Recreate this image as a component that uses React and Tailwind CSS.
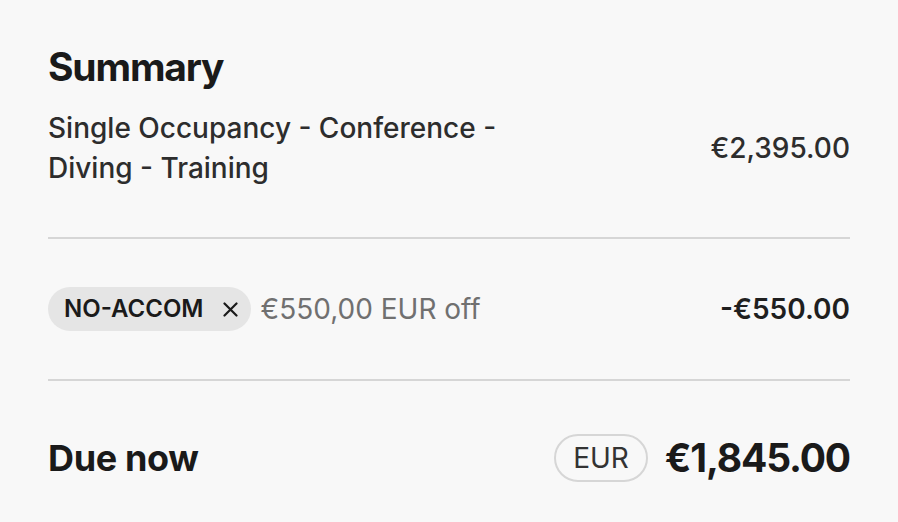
import React from 'react';

function App() {
  return (
    <div className="w-[898px] h-[522px] bg-[#f8f8f8] overflow-hidden" style={{ fontFamily: 'Inter, "Noto Sans", sans-serif' }}>
      <div className="px-12 pt-[43px]">
        {/* Summary */}
        <h2 className="text-[39px] leading-[48px] font-bold text-[#1a1a1a] tracking-[-0.03em]">Summary</h2>
        <div className="flex items-center justify-between mt-[17px] pb-[49px] border-b-2 border-[#d6d6d6]">
          <p className="text-[28px] leading-[40px] font-medium text-[#2d2d2d] w-[470px]">
            Single Occupancy - Conference - Diving - Training
          </p>
          <p className="text-[28px] leading-[40px] font-medium text-[#2d2d2d]">€2,395.00</p>
        </div>

        {/* Discount */}
        <div className="flex items-center justify-between pt-[48px] pb-[48px] border-b-2 border-[#d6d6d6]">
          <div className="flex items-center gap-[10px]">
            <span className="flex items-center gap-[19px] h-[44px] pl-4 pr-[13px] rounded-full bg-[#e5e5e5] text-[24px] font-semibold text-[#1a1a1a]">
              NO-ACCOM
              <svg width="15" height="15" viewBox="0 0 15 15" fill="none" stroke="#1a1a1a" strokeWidth="2.2" strokeLinecap="round">
                <path d="M1.5 1.5L13.5 13.5M13.5 1.5L1.5 13.5" />
              </svg>
            </span>
            <span className="text-[28px] text-[#707070]">€550,00 EUR off</span>
          </div>
          <p className="text-[28px] font-semibold text-[#1f1f1f]">-€550.00</p>
        </div>

        {/* Total */}
        <div className="flex items-center justify-between pt-[50px]">
          <p className="text-[36px] font-bold text-[#1a1a1a] tracking-[-0.01em]">Due now</p>
          <div className="flex items-center gap-[17px]">
            <span className="h-[48px] px-[17px] flex items-center rounded-full border-2 border-[#d6d6d6] text-[28px] text-[#333333]">EUR</span>
            <span className="text-[39px] leading-[48px] font-bold text-[#1a1a1a] tracking-[-0.03em]">€1,845.00</span>
          </div>
        </div>
      </div>
    </div>
  );
}

export default App;
